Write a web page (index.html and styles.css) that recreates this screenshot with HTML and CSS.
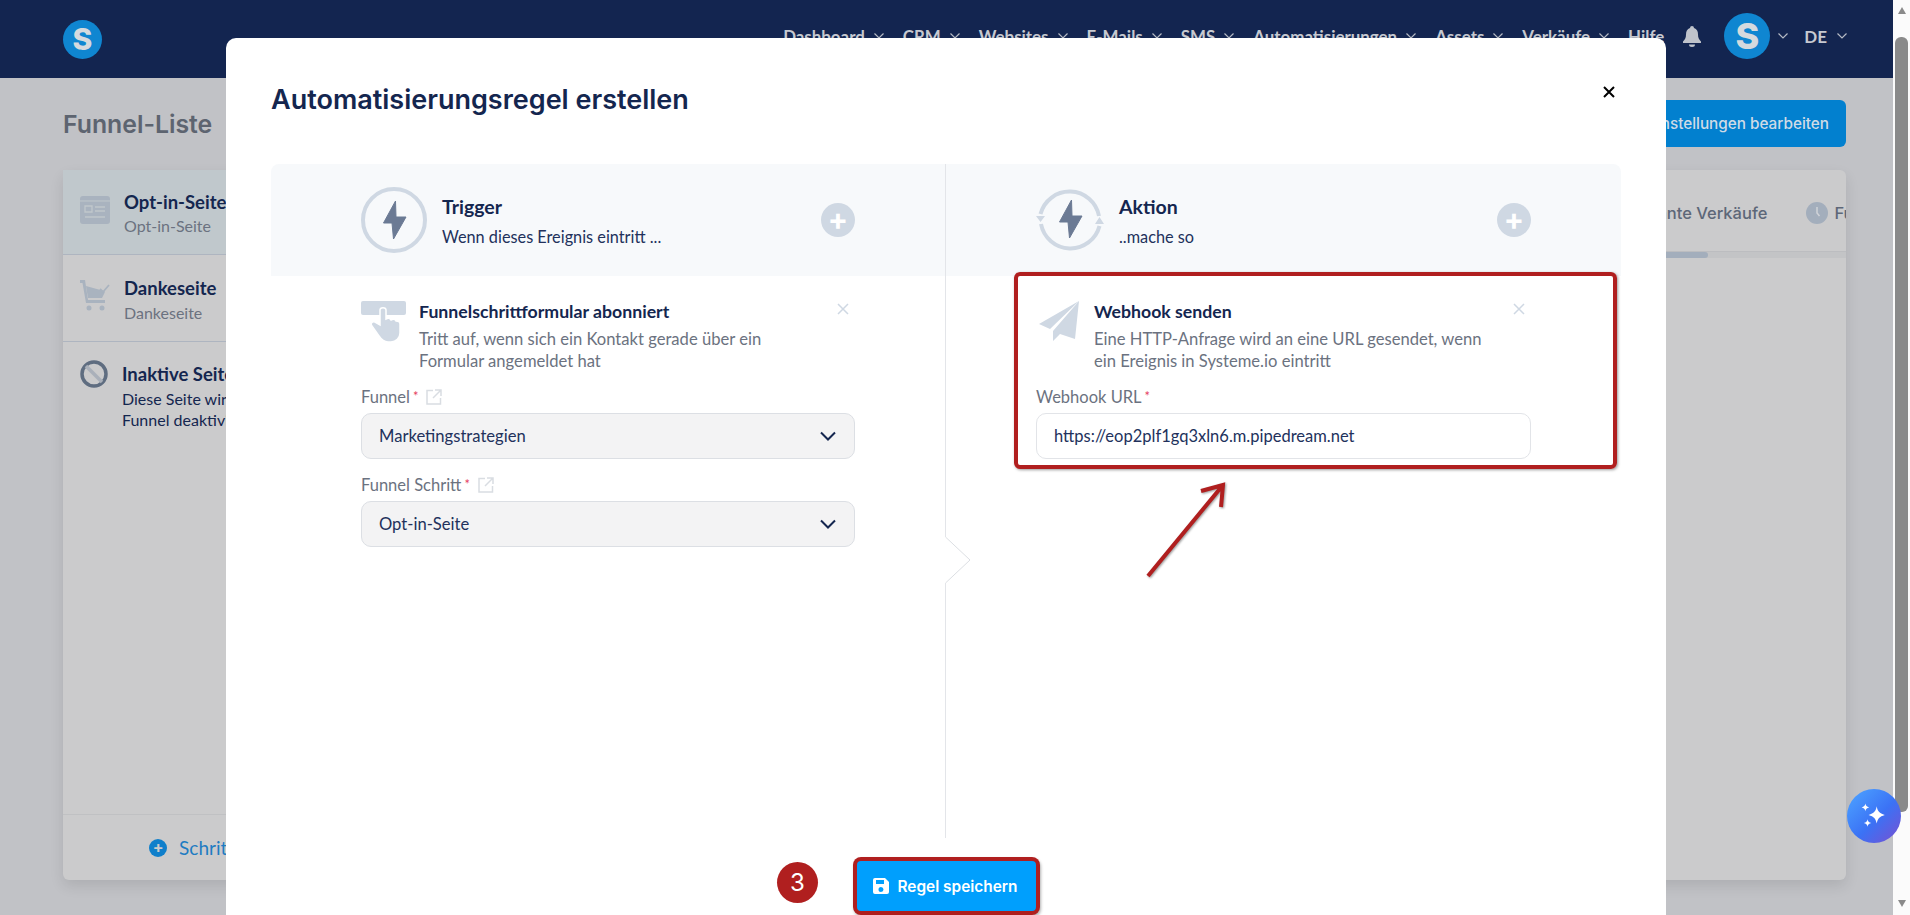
FILE: index.html
```html
<!DOCTYPE html>
<html lang="de">
<head>
    <meta charset="utf-8">
    <title>Automatisierungsregel erstellen</title>
    <link rel="stylesheet" href="styles.css">
</head>
<body>
<div class="app">
    <header class="topbar">
        <div class="logo">S</div>
        <nav class="nav">
            <span class="nav-item">Dashboard <svg class="chev" viewBox="0 0 10 6"><path d="M.5.5 5 5 9.500.5"/></svg></span>
            <span class="nav-item">CRM <svg class="chev" viewBox="0 0 10 6"><path d="M.5.5 5 5 9.500.5"/></svg></span>
            <span class="nav-item">Websites <svg class="chev" viewBox="0 0 10 6"><path d="M.5.5 5 5 9.500.5"/></svg></span>
            <span class="nav-item">E-Mails <svg class="chev" viewBox="0 0 10 6"><path d="M.5.5 5 5 9.500.5"/></svg></span>
            <span class="nav-item">SMS <svg class="chev" viewBox="0 0 10 6"><path d="M.5.5 5 5 9.500.5"/></svg></span>
            <span class="nav-item">Automatisierungen <svg class="chev" viewBox="0 0 10 6"><path d="M.5.5 5 5 9.500.5"/></svg></span>
            <span class="nav-item">Assets <svg class="chev" viewBox="0 0 10 6"><path d="M.5.5 5 5 9.500.5"/></svg></span>
            <span class="nav-item">Verkäufe <svg class="chev" viewBox="0 0 10 6"><path d="M.5.5 5 5 9.500.5"/></svg></span>
            <span class="nav-item">Hilfe</span>
        </nav>
        <svg class="bell" viewBox="0 0 18 21"><path d="M9 0a2 2 0 0 1 2 2c3 1 4 3.500 4 6.500 0 3.500 1 5 3 7v1.500H0v-1.500c2-2 3-3.500 3-7C3 5.500 4 3 7 2a2 2 0 0 1 2-2zM6 18.500h6a3 2.500 0 0 1-6 0z"/></svg>
        <div class="avatar">S</div>
        <svg class="chev chev-avatar" viewBox="0 0 10 6"><path d="M.5.5 5 5 9.500.5"/></svg>
        <span class="lang">DE</span>
        <svg class="chev" viewBox="0 0 10 6"><path d="M.5.5 5 5 9.500.5"/></svg>
    </header>

    <main class="page">
        <div class="page-head">
            <h2 class="page-title">Funnel-Liste</h2>
            <button class="settings-btn">Einstellungen bearbeiten</button>
        </div>
        <section class="funnel-card">
            <aside class="steps">
                <div class="step step-active">
                    <svg class="step-icon" viewBox="0 0 30 28"><rect width="30" height="28" rx="3" fill="#a9b3bf"/><path d="M0 5h30" stroke="#c0c8cc" stroke-width="1"/><path d="M5 10h7v6H5zM15 11h10M15 15h10M5 21h20" stroke="#c0c8cc" stroke-width="1.300" fill="none"/></svg>
                    <div>
                        <div class="step-name">Opt-in-Seite</div>
                        <div class="step-type">Opt-in-Seite</div>
                    </div>
                </div>
                <div class="step">
                    <svg class="step-icon step-cart" viewBox="0 0 30 31"><path d="M0 0h5l3 20h17v3H6L2.500 3H0z" fill="#a9b3bf"/><path d="M6 6l18 5c1 0 1 1 .5 2L22 18H8z" fill="#a9b3bf"/><circle cx="9" cy="28" r="2.500" fill="#a9b3bf"/><circle cx="22" cy="28" r="2.500" fill="#a9b3bf"/><path d="M20 9l3 3 6-7" stroke="#a9b3bf" stroke-width="1.800" fill="none"/></svg>
                    <div>
                        <div class="step-name">Dankeseite</div>
                        <div class="step-type">Dankeseite</div>
                    </div>
                </div>
                <div class="inactive">
                    <svg class="inactive-icon" viewBox="0 0 28 28"><circle cx="14" cy="14" r="12" fill="none" stroke="#5f6d80" stroke-width="3.500"/><path d="M6 6l16 16" stroke="#aab0ba" stroke-width="3.500"/></svg>
                    <div>
                        <div class="step-name">Inaktive Seite</div>
                        <p class="inactive-text">Diese Seite wird nicht angezeigt, da der Funnel deaktiviert ist</p>
                    </div>
                </div>
                <div class="add-step">
                    <span class="add-icon">+</span>
                    <span>Schritt hinzufügen</span>
                </div>
            </aside>
            <div class="stats">
                <div class="tabs">
                    <span class="tab">Geplante Verkäufe</span>
                    <svg class="clock" viewBox="0 0 22 22"><circle cx="11" cy="11" r="11" fill="#a3aebc"/><path d="M11 5v6l2.500 3" stroke="#d0d3d8" stroke-width="1.500" fill="none"/></svg>
                    <span class="tab">Funnel</span>
                </div>
                <div class="tab-scroll"><div class="tab-thumb"></div></div>
            </div>
        </section>
    </main>
</div>

<div class="scrollbar">
    <span class="arrow arrow-up"></span>
    <div class="thumb"></div>
    <span class="arrow arrow-down"></span>
</div>

<div class="modal">
    <div class="modal-head">
        <h1 class="modal-title">Automatisierungsregel erstellen</h1>
        <svg class="modal-close" viewBox="0 0 12 12"><path d="M1 1l10 10M11 1 1 11"/></svg>
    </div>

    <div class="columns">
        <div class="column column-left">
            <div class="col-head">
                <svg class="ring" viewBox="0 0 66 66"><circle cx="33" cy="33" r="31" fill="none" stroke="#cfd8e3" stroke-width="4"/><path d="M34.500 14 22.500 36H31l1.500 16L45 30H35z" fill="#6b7a94" stroke="#6b7a94" stroke-linejoin="round"/></svg>
                <div class="col-text">
                    <div class="col-title">Trigger</div>
                    <div class="col-sub">Wenn dieses Ereignis eintritt ...</div>
                </div>
                <span class="plus">+</span>
            </div>
            <div class="rule">
                <div class="rule-top">
                    <svg class="rule-icon" viewBox="0 0 45 42"><rect width="45" height="14" rx="2" fill="#cfd8e3"/><path d="M19 9v15l-5-3c-3-1-5 2-3 4l7 10c2 3 5 6 9 6h3c5 0 9-4 9-9v-9c0-2-2-3-4-3-1-2-3-2-5-1-1-2-3-2-5-1V9c0-3-6-3-6 0z" fill="#cfd8e3" stroke="#fff" stroke-width="1.500"/></svg>
                    <div class="rule-text">
                        <div class="rule-title">Funnelschrittformular abonniert</div>
                        <p class="rule-desc">Tritt auf, wenn sich ein Kontakt gerade über ein Formular angemeldet hat</p>
                    </div>
                    <svg class="rule-close" viewBox="0 0 12 12"><path d="M1 1l10 10M11 1 1 11"/></svg>
                </div>
                <div class="field">
                    <label class="field-label">Funnel<span class="req">*</span>
                        <svg class="ext" viewBox="0 0 16 16"><path d="M7 1.500H1v13.500h13.500V9M9 1h6v6M15 1 7 9"/></svg>
                    </label>
                    <div class="select">Marketingstrategien
                        <svg class="select-chev" viewBox="0 0 16 10"><path d="M1 1.500l7 7 7-7"/></svg>
                    </div>
                </div>
                <div class="field">
                    <label class="field-label">Funnel Schritt<span class="req">*</span>
                        <svg class="ext" viewBox="0 0 16 16"><path d="M7 1.500H1v13.500h13.500V9M9 1h6v6M15 1 7 9"/></svg>
                    </label>
                    <div class="select">Opt-in-Seite
                        <svg class="select-chev" viewBox="0 0 16 10"><path d="M1 1.500l7 7 7-7"/></svg>
                    </div>
                </div>
            </div>
        </div>

        <svg class="notch" viewBox="0 0 26 46"><path d="M0 0h1l24 23L1 46H0z" fill="#fff"/><path d="M.5 0l24.500 23L.5 46" fill="none" stroke="#dcdfe3"/></svg>

        <div class="column column-right">
            <div class="col-head">
                <svg class="ring ring-action" viewBox="0 0 68 68"><path d="M4.500 28A30 30 0 0 1 63 30M63.500 40A30 30 0 0 1 5 38" fill="none" stroke="#cfd8e3" stroke-width="4"/><path d="M0 30h9l-4.500 6zM59 38h9l-4.500-7z" fill="#cfd8e3"/><path d="M35.500 14 23.500 36H32l1.500 16L46 30H36z" fill="#6b7a94" stroke="#6b7a94" stroke-linejoin="round"/></svg>
                <div class="col-text">
                    <div class="col-title">Aktion</div>
                    <div class="col-sub">..mache so</div>
                </div>
                <span class="plus">+</span>
            </div>
            <div class="rule">
                <div class="rule-top">
                    <svg class="rule-icon rule-plane" viewBox="0 0 40 40"><path d="M40 0 0 23l11 5zM40 0 14 30v10l7-7 15 5z" fill="#cfd8e3"/></svg>
                    <div class="rule-text">
                        <div class="rule-title">Webhook senden</div>
                        <p class="rule-desc">Eine HTTP-Anfrage wird an eine URL gesendet, wenn ein Ereignis in Systeme.io eintritt</p>
                    </div>
                    <svg class="rule-close" viewBox="0 0 12 12"><path d="M1 1l10 10M11 1 1 11"/></svg>
                </div>
                <div class="field">
                    <label class="field-label">Webhook URL<span class="req">*</span></label>
                    <div class="input">https://eop2plf1gq3xln6.m.pipedream.net</div>
                </div>
            </div>
        </div>
    </div>

    <div class="modal-foot">
        <span class="badge">3</span>
        <button class="save-btn">
            <svg class="save-icon" viewBox="0 0 16 16"><path fill-rule="evenodd" d="M2 0h10l4 4v10a2 2 0 0 1-2 2H2a2 2 0 0 1-2-2V2a2 2 0 0 1 2-2zm1 2v4h8V2zm5 7a2.500 2.500 0 1 0 0 5 2.500 2.500 0 0 0 0-5z"/></svg>
            Regel speichern
        </button>
    </div>

    <div class="callout"></div>
    <svg class="callout-arrow" viewBox="0 0 90 100"><path d="M4 97 79 6M57 12 79 6 77 28"/></svg>
</div>

<button class="spark-btn">
    <svg viewBox="0 0 26 26"><path d="M15.500 4c.8 4.500 2.500 6.500 7.500 8-5 1.500-6.700 3.500-7.500 8-.8-4.500-2.500-6.500-7.500-8 5-1.500 6.700-3.500 7.500-8zM5 1.500c.4 2 1.200 3 3.500 3.500C6.200 5.500 5.400 6.500 5 8.500c-.4-2-1.200-3-3.500-3.500C3.800 4.500 4.600 3.500 5 1.500zM7 16c.4 2 1.200 3 3.500 3.500C8.200 20 7.400 21 7 23c-.4-2-1.200-3-3.500-3.500C5.800 19 6.600 18 7 16z" fill="#fff"/></svg>
</button>
</body>
</html>
```

FILE: styles.css
```css
* {
    box-sizing: border-box;
}

html, body {
    margin: 0;
    height: 915px;
    overflow: hidden;
}

body {
    display: flex;
    position: relative;
    background-color: #c1c2c6;
    font-family: 'Lato', sans-serif;
    color: #14264f;
}

h1, h2, p {
    margin: 0;
}

.app {
    flex: 1;
    min-width: 0;
}

/* top navigation */
.topbar {
    display: flex;
    align-items: center;
    height: 78px;
    padding: 0 46px 6px 63px;
    background-color: #132550;
    color: #c6c9d0;
}

.logo {
    width: 39px;
    height: 39px;
    margin-top: 6px;
    border-radius: 50%;
    background-color: #0f86d1;
    color: #d5dade;
    font: 800 30px/39px 'Inter', sans-serif;
    text-align: center;
}

.nav {
    display: flex;
    gap: 19px;
    margin-left: auto;
}

.nav-item {
    display: flex;
    align-items: center;
    gap: 9px;
    font-weight: 700;
    font-size: 16.900px;
    white-space: nowrap;
}

.chev {
    width: 10px;
    height: 6px;
    fill: none;
    stroke: #b5bac4;
    stroke-width: 1.200;
}

.bell {
    width: 18px;
    height: 21px;
    margin-left: 19px;
    fill: #bfc3cb;
}

.avatar {
    width: 46px;
    height: 46px;
    margin-left: 23px;
    border-radius: 50%;
    background-color: #0f86d1;
    color: #d5dade;
    font: 800 36px/46px 'Inter', sans-serif;
    text-align: center;
}

.chev-avatar {
    margin: 0 16px 0 8px;
}

.lang {
    margin-right: 10px;
    font-weight: 700;
    font-size: 17px;
}

/* page behind the modal */
.page {
    padding: 22px 47px 0 63px;
}

.page-head {
    display: flex;
    justify-content: space-between;
    align-items: center;
    height: 47px;
    margin-bottom: 23px;
}

.page-title {
    font: 600 24.800px 'Inter', sans-serif;
    color: #5d6470;
}

.settings-btn {
    height: 47px;
    padding: 0 17px;
    border: none;
    border-radius: 6px;
    background-color: #0280cf;
    color: #cfdbe6;
    font: 500 15.300px 'Inter', sans-serif;
}

.funnel-card {
    display: flex;
    height: 710px;
    border-radius: 6px;
    background-color: #cbcbcc;
    box-shadow: 0 6px 14px rgba(0, 0, 0, 0.1);
}

.steps {
    display: flex;
    flex-direction: column;
    width: 400px;
}

.step {
    display: flex;
    gap: 14px;
    height: 87px;
    padding: 22px 17px 0;
    border-bottom: 1px solid #aeb5c0;
}

.step-active {
    height: 85px;
    padding-top: 21px;
    background-color: #c0c8cc;
}

.step-icon {
    flex: none;
    width: 30px;
    height: 28px;
    margin-top: 5px;
}

.step-cart {
    height: 31px;
    margin-top: 3px;
}

.step-name {
    font-weight: 700;
    font-size: 18.500px;
    line-height: 22px;
    white-space: nowrap;
}

.step-type {
    margin-top: 4px;
    font-size: 16px;
    color: #6b7280;
}

.step-active .step-type {
    margin-top: 3px;
}

.inactive {
    display: flex;
    gap: 14px;
    flex: 1;
    padding: 21px 17px 0;
}

.inactive-icon {
    flex: none;
    width: 28px;
    height: 28px;
    margin-top: -3px;
}

.inactive-text {
    margin-top: 3px;
    font-size: 16px;
    line-height: 21px;
}

.add-step {
    display: flex;
    align-items: center;
    justify-content: center;
    gap: 12px;
    height: 66px;
    padding-right: 46px;
    border-top: 1px solid #c0c1c3;
    color: #1e7cc2;
    font-size: 19px;
    white-space: nowrap;
}

.add-icon {
    width: 18px;
    height: 18px;
    border-radius: 50%;
    background-color: #0f7fcb;
    color: #cbcbcc;
    font: 700 16px/17px 'Inter', sans-serif;
    text-align: center;
}

.stats {
    flex: 1;
    min-width: 0;
    overflow: hidden;
}

.tabs {
    display: flex;
    align-items: center;
    height: 82px;
    padding: 4px 0 0 1158px;
    border-bottom: 1px solid #bcbdc0;
    color: #5d6778;
    font: 500 16.500px 'Inter', sans-serif;
    white-space: nowrap;
}

.clock {
    flex: none;
    width: 22px;
    height: 22px;
    margin: 0 6px 0 39px;
}

.tab-scroll {
    height: 6px;
    background-color: #c3c4c6;
}

.tab-thumb {
    width: 1245px;
    height: 6px;
    border-radius: 3px;
    background-color: #a3aebc;
}

/* fake browser scrollbar */
.scrollbar {
    display: flex;
    flex: none;
    flex-direction: column;
    align-items: center;
    width: 17px;
    background-color: #fbfbfb;
}

.thumb {
    width: 13px;
    height: 775px;
    margin-top: 23px;
    border-radius: 6px;
    background-color: #8a8a8a;
}

.arrow {
    width: 0;
    height: 0;
    border-left: 4.500px solid transparent;
    border-right: 4.500px solid transparent;
}

.arrow-up {
    margin-top: 7px;
    border-bottom: 7px solid #8a8a8a;
}

.arrow-down {
    margin-top: 88px;
    border-top: 7px solid #8a8a8a;
}

/* modal */
.modal {
    position: absolute;
    top: 38px;
    left: 226px;
    display: flex;
    flex-direction: column;
    width: 1440px;
    height: 877px;
    padding: 0 45px;
    border-radius: 10px 10px 0 0;
    background-color: #fff;
}

.modal-head {
    display: flex;
    justify-content: space-between;
    height: 126px;
    padding-top: 45px;
}

.modal-title {
    font: 600 27px/34px 'Inter', sans-serif;
    color: #14264f;
}

.modal-close {
    width: 12px;
    height: 12px;
    margin: 3px 6px 0 0;
    fill: none;
    stroke: #000;
    stroke-width: 2;
}

.columns {
    display: grid;
    grid-template-columns: 675px 1fr;
    position: relative;
    height: 674px;
}

.column-left {
    border-right: 1px solid #e3e5e9;
}

.col-head {
    display: flex;
    align-items: center;
    height: 112px;
    padding: 0 90px;
    background-color: #f7f9fb;
}

.column-left .col-head {
    border-radius: 8px 0 0 0;
}

.column-right .col-head {
    border-radius: 0 8px 0 0;
}

.ring {
    flex: none;
    width: 66px;
    height: 66px;
    margin-right: 15px;
}

.ring-action {
    width: 68px;
    height: 68px;
}

.col-text {
    flex: 1;
    padding-top: 2px;
}

.col-title {
    font-weight: 700;
    font-size: 19.500px;
    line-height: 22px;
    color: #14264f;
}

.col-sub {
    margin-top: 9px;
    font-size: 16.300px;
    line-height: 20px;
    color: #22315c;
}

.plus {
    width: 34px;
    height: 34px;
    border-radius: 50%;
    background-color: #cfd8e3;
    color: #fff;
    font: 700 30px/32px 'Inter', sans-serif;
    text-align: center;
}

.rule {
    padding: 25px 90px 0;
}

.rule-top {
    display: flex;
    position: relative;
    height: 82px;
}

.rule-icon {
    flex: none;
    width: 45px;
    height: 42px;
    margin-right: 13px;
}

.rule-plane {
    width: 40px;
    height: 40px;
    margin: 0 15px 0 3px;
}

.rule-text {
    width: 390px;
}

.rule-title {
    font-weight: 700;
    font-size: 17.700px;
    line-height: 22px;
    color: #14264f;
    white-space: nowrap;
}

.rule-desc {
    margin-top: 5px;
    font-size: 16.600px;
    line-height: 22px;
    color: #6b7280;
}

.rule-close {
    position: absolute;
    top: 2px;
    right: 6px;
    width: 12px;
    height: 12px;
    fill: none;
    stroke: #cfd8e3;
    stroke-width: 1.500;
}

.field {
    margin-top: 2px;
    margin-bottom: 14px;
}

.field-label {
    display: flex;
    align-items: center;
    height: 24px;
    margin-bottom: 4px;
    font-size: 16.500px;
    color: #6b7280;
}

.req {
    align-self: flex-start;
    margin: 3px 0 0 3px;
    font-size: 13px;
    color: #e5405e;
}

.ext {
    width: 16px;
    height: 16px;
    margin-left: 8px;
    fill: none;
    stroke: #d9dde2;
    stroke-width: 1.500;
}

.select, .input {
    display: flex;
    align-items: center;
    justify-content: space-between;
    height: 46px;
    padding: 0 18px 0 17px;
    border: 1px solid #dcdfe4;
    border-radius: 10px;
    background-color: #f3f3f4;
    font-size: 16.600px;
    color: #22315c;
}

.input {
    background-color: #fff;
    border-color: #e2e4e8;
    font-size: 16.500px;
}

.select-chev {
    width: 16px;
    height: 10px;
    fill: none;
    stroke: #14264f;
    stroke-width: 2;
}

.notch {
    position: absolute;
    top: 373px;
    left: 674px;
    width: 26px;
    height: 46px;
}

.modal-foot {
    display: flex;
    justify-content: center;
    position: relative;
    padding-top: 23px;
}

.save-btn {
    display: flex;
    align-items: center;
    gap: 9px;
    width: 179px;
    height: 50px;
    padding-left: 16px;
    border: none;
    border-radius: 4px;
    background-color: #009ffd;
    box-shadow: 0 0 0 4px #b01f1f, 1px 2px 3px 4px rgba(0, 0, 0, 0.3);
    color: #fff;
    font: 600 15.400px 'Inter', sans-serif;
}

.save-icon {
    width: 16px;
    height: 16px;
    fill: #fff;
}

.badge {
    position: absolute;
    top: 24px;
    left: 506px;
    width: 41px;
    height: 41px;
    border-radius: 50%;
    background-color: #b01f1f;
    color: #fff;
    font: 400 24px/41px 'Inter', sans-serif;
    text-align: center;
}

/* red annotations over the modal */
.callout {
    position: absolute;
    top: 234px;
    left: 788px;
    width: 603px;
    height: 197px;
    border: 4px solid #b01f1f;
    border-radius: 6px;
    box-shadow: 1px 1px 3px rgba(0, 0, 0, 0.4);
}

.callout-arrow {
    position: absolute;
    top: 441px;
    left: 918px;
    width: 90px;
    height: 100px;
    fill: none;
    stroke: #b01f1f;
    stroke-width: 4;
    filter: drop-shadow(1px 1px 1px rgba(0, 0, 0, 0.4));
}

.spark-btn {
    position: absolute;
    top: 789px;
    left: 1847px;
    display: flex;
    align-items: center;
    justify-content: center;
    width: 54px;
    height: 54px;
    padding: 0;
    border: none;
    border-radius: 50%;
    background: linear-gradient(135deg, #4a9dff 10%, #3b72f5 55%, #7a4fd0 100%);
}

.spark-btn svg {
    width: 28px;
    height: 28px;
}
```
